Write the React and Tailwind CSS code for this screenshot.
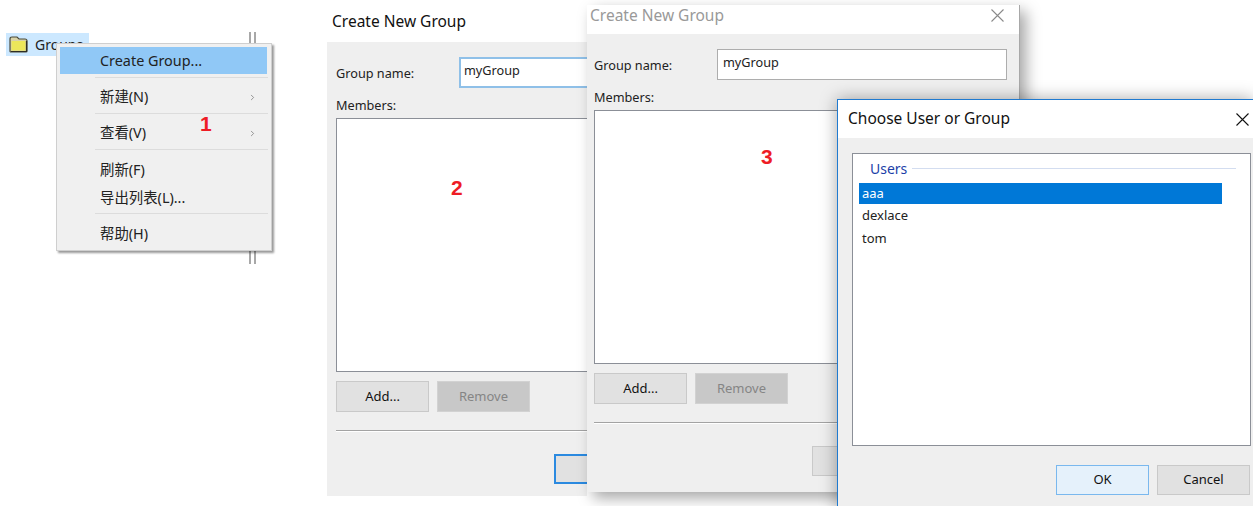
import { ChevronRight } from "lucide-react";

const FONT = "font-['Noto_Sans','Noto_Sans_CJK_SC',sans-serif]";

function CloseIcon({ color, size }) {
  return (
    <svg width={size} height={size} viewBox="0 0 13 13" fill="none" stroke={color} strokeWidth="1.1">
      <path d="M0.5 0.5 L12.5 12.5 M12.5 0.5 L0.5 12.5" />
    </svg>
  );
}

function FolderIcon() {
  return (
    <svg width="19" height="17" viewBox="0 0 19 17" className="shrink-0">
      <path d="M1 15 V3 Q1 1 3 1 H8 L10 3 H16 Q18 3 18 5 V15 Q18 16 17 16 H2 Q1 16 1 15 Z" fill="#d9d3a8" stroke="#4a4a3a" strokeWidth="1.2" />
      <rect x="2.5" y="5" width="14" height="9.5" fill="#ece75a" />
      <path d="M2 15.5 H17.5 V5" fill="none" stroke="#2e2e26" strokeWidth="1.2" />
    </svg>
  );
}

function WinButton({ children, className = "" }) {
  return (
    <div className={`flex w-[93px] shrink-0 items-center justify-center border text-[13px] ${className}`}>
      {children}
    </div>
  );
}

function GroupForm({ padLeft, inputBorder, okBorder, panelHeight }) {
  return (
    <div className={`w-[432px] bg-[#efefef] pt-[15px] ${padLeft} ${panelHeight}`}>
      <div className="flex h-[31px] w-[413px]">
        <div className="flex w-[123px] items-center pt-[2px] text-[12.7px] text-[#222]">Group name:</div>
        <div className={`flex h-[31px] w-[290px] items-center bg-white pb-[4px] text-[12.7px] text-[#222] ${inputBorder}`}>
          myGroup
        </div>
      </div>
      <div className="flex h-[30px] items-center pt-[6px] text-[12.7px] text-[#222]">Members:</div>
      <div className="h-[254px] w-[413px] border border-[#8b8f97] bg-white" />
      <div className="mt-[9px] flex h-[31px] gap-2">
        <WinButton className="border-[#c9c9c9] bg-[#e1e1e1] text-[#111]">Add...</WinButton>
        <WinButton className="border-[#d2d2d2] bg-[#c8c8c8] text-[#858585]">Remove</WinButton>
      </div>
      <div className="mt-[18px] h-[2px] w-[413px] border-t border-b border-t-[#a3a3a3] border-b-white" />
      <div className="mt-[22px] flex h-[30px] pl-[218px]">
        <WinButton className={`bg-[#e1e1e1] ${okBorder}`} />
      </div>
    </div>
  );
}

function MenuRow({ label, className, arrow }) {
  return (
    <div className={`flex items-center justify-between pr-[11px] pl-[40px] text-[14.4px] text-[#222] ${className}`}>
      <span>{label}</span>
      {arrow && <ChevronRight size={9} color="#777" strokeWidth={2} />}
    </div>
  );
}

function MenuSep() {
  return <div className="ml-[35px] h-px bg-[#dcdcdc]" />;
}

function Badge({ children, className }) {
  return (
    <span className={`absolute font-['Liberation_Sans',sans-serif] text-[21px] leading-none font-bold text-[#ee1c25] ${className}`}>
      {children}
    </span>
  );
}

export default function App() {
  return (
    <div className={`relative h-[506px] w-[1253px] overflow-hidden bg-white ${FONT}`}>
      {/* tree item behind the context menu */}
      <div className="absolute top-[33px] left-[6px] flex h-[23px] w-[83px] items-center gap-[7px] bg-[#cce8ff] pl-[3px] text-[14px] text-[#222]">
        <FolderIcon />
        <span>Groups</span>
      </div>
      <div className="absolute top-[32px] left-[249px] flex h-[232px] w-[7px] justify-between">
        <div className="w-[2px] bg-[#a8a8a8]" />
        <div className="w-[2px] bg-[#a8a8a8]" />
      </div>

      {/* context menu */}
      <div className="absolute top-[43px] left-[56px] h-[208px] w-[216px] border border-[#cfcfcf] bg-[#f0f0f0] px-[3px] pt-[3px] shadow-[2px_2px_2px_rgba(0,0,0,0.4)]">
        <div className="flex h-[27px] w-[207px] items-center bg-[#90c8f6] pl-[40px] text-[14.4px] text-[#222]">
          Create Group...
        </div>
        <div className="h-[3px]" />
        <MenuSep />
        <MenuRow label="新建(N)" className="h-[35px] pt-[3px]" arrow />
        <MenuSep />
        <MenuRow label="查看(V)" className="h-[35px] pt-[3px]" arrow />
        <MenuSep />
        <MenuRow label="刷新(F)" className="h-[34px] pt-[5px]" />
        <MenuRow label="导出列表(L)..." className="h-[29px] pb-[2px]" />
        <MenuSep />
        <MenuRow label="帮助(H)" className="h-[38px] pt-[1px]" />
        <Badge className="top-[69px] left-[143px]">1</Badge>
      </div>

      {/* first dialog, the second one covers its right part */}
      <div className="absolute top-0 left-[327px] h-[496px] w-[260px] overflow-hidden bg-white">
        <div className="flex h-[42px] items-center pt-[2px] pl-[5px] text-[15.5px] text-[#111]">Create New Group</div>
        <GroupForm
          padLeft="pl-[9px]"
          inputBorder="border-2 border-[#8fc0e8] pl-[3px]"
          okBorder="border-2 border-[#2b8ae0]"
          panelHeight="h-[454px]"
        />
        <Badge className="top-[177px] left-[124px]">2</Badge>
      </div>

      {/* second dialog */}
      <div className="absolute top-[5px] left-[587px] w-[433px] border-r border-[#a8a8a8] bg-white shadow-[6px_6px_14px_rgba(0,0,0,0.35)]">
        <div className="flex h-[29px] items-center justify-between pr-[15px] pb-[8px] pl-[3px] text-[15.5px] text-[#999]">
          <span>Create New Group</span>
          <CloseIcon color="#8a8a8a" size={13} />
        </div>
        <GroupForm
          padLeft="pl-[7px]"
          inputBorder="border border-[#adadad] pl-[5px]"
          okBorder="border border-[#c9c9c9]"
          panelHeight="h-[458px]"
        />
        <Badge className="top-[141px] left-[174px]">3</Badge>
      </div>

      {/* chooser */}
      <div className="absolute top-[99px] left-[837px] h-[412px] w-[416px] border-t border-l border-[#1f7ad0] bg-[#efefef] shadow-[0_0_16px_rgba(0,0,0,0.35)]">
        <div className="flex h-[38px] items-center justify-between bg-white pr-[4px] pl-[10px] text-[15.5px] text-[#111]">
          <span>Choose User or Group</span>
          <CloseIcon color="#111" size={13} />
        </div>
        <div className="pt-[15px] pl-[14px]">
          <div className="h-[293px] w-[399px] border border-[#8b8f97] bg-white pl-[6px]">
            <div className="flex h-[29px] items-center gap-[5px] pl-[11px]">
              <span className="text-[14px] text-[#1c3fa8]">Users</span>
              <div className="h-px w-[324px] bg-[#d3ddf0]" />
            </div>
            <div className="flex h-[21px] w-[363px] items-center bg-[#0078d7] pl-[3px] text-[13px] text-white">aaa</div>
            <div className="flex h-[23px] items-center pt-[1px] pl-[3px] text-[13px] text-[#222]">dexlace</div>
            <div className="flex h-[22px] items-center pt-[1px] pl-[3px] text-[13px] text-[#222]">tom</div>
          </div>
          <div className="mt-[19px] flex h-[30px] justify-end gap-2 pr-[3px]">
            <WinButton className="border-[#7ab8ee] bg-[#e5f1fb] text-[#111]">OK</WinButton>
            <WinButton className="border-[#c9c9c9] bg-[#e1e1e1] text-[#111]">Cancel</WinButton>
          </div>
        </div>
      </div>
    </div>
  );
}
